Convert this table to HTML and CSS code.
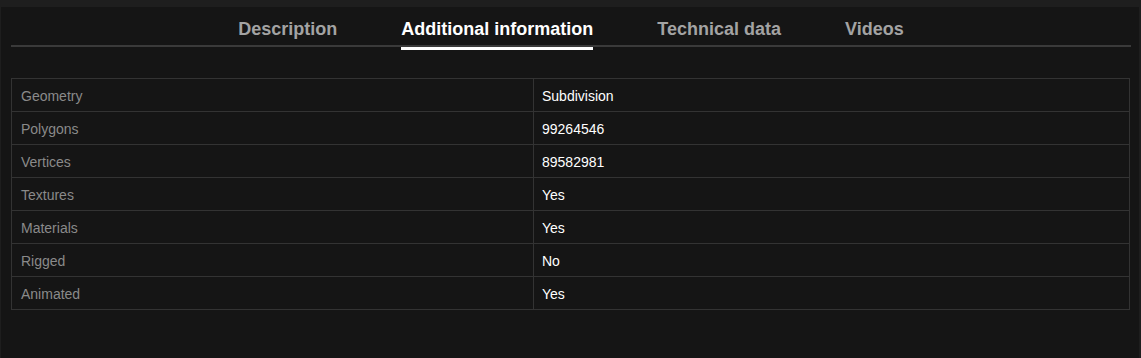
FILE: index.html
```html
<!DOCTYPE html>
<html lang="en">
<head>
<meta charset="utf-8">
<title>Additional information</title>
<link rel="stylesheet" href="styles.css">
</head>
<body>
<div class="panel">
  <nav class="tabs">
    <span class="tab">Description</span>
    <span class="tab active">Additional information</span>
    <span class="tab">Technical data</span>
    <span class="tab">Videos</span>
  </nav>
  <table class="info">
    <tbody>
      <tr><td class="label">Geometry</td><td class="value">Subdivision</td></tr>
      <tr><td class="label">Polygons</td><td class="value">99264546</td></tr>
      <tr><td class="label">Vertices</td><td class="value">89582981</td></tr>
      <tr><td class="label">Textures</td><td class="value">Yes</td></tr>
      <tr><td class="label">Materials</td><td class="value">Yes</td></tr>
      <tr><td class="label">Rigged</td><td class="value">No</td></tr>
      <tr><td class="label">Animated</td><td class="value">Yes</td></tr>
    </tbody>
  </table>
</div>
</body>
</html>
```
FILE: styles.css
```css
html, body {
  margin: 0;
  padding: 0;
  background: #1e1e1e;
  font-family: "Liberation Sans", Arial, sans-serif;
}
.panel {
  margin: 7px 2px 0 1px;
  height: 351px;
  background: #151515;
  padding: 0 8px 0 10px;
  box-sizing: border-box;
  overflow: hidden;
}
.tabs {
  display: flex;
  justify-content: center;
  border-bottom: 2px solid #3a3a3a;
}
.tab {
  position: relative;
  padding: 12px 32px 5px;
  font-size: 18px;
  line-height: 21px;
  font-weight: bold;
  color: #a3a3a3;
}
.tab.active {
  color: #ffffff;
}
.tab.active::after {
  content: "";
  position: absolute;
  left: 32px;
  right: 32px;
  bottom: -5px;
  height: 3px;
  background: #ffffff;
}
.info {
  margin-top: 31px;
  width: 1119px;
  border-collapse: collapse;
  font-size: 14px;
}
.info td {
  border: 1px solid #333333;
  height: 33px;
  padding: 1px 8px 0 9px;
  vertical-align: middle;
  box-sizing: border-box;
}
.info .label {
  width: 522px;
  color: #8a8a8a;
}
.info .value {
  padding-left: 8px;
  color: #ffffff;
}
```
